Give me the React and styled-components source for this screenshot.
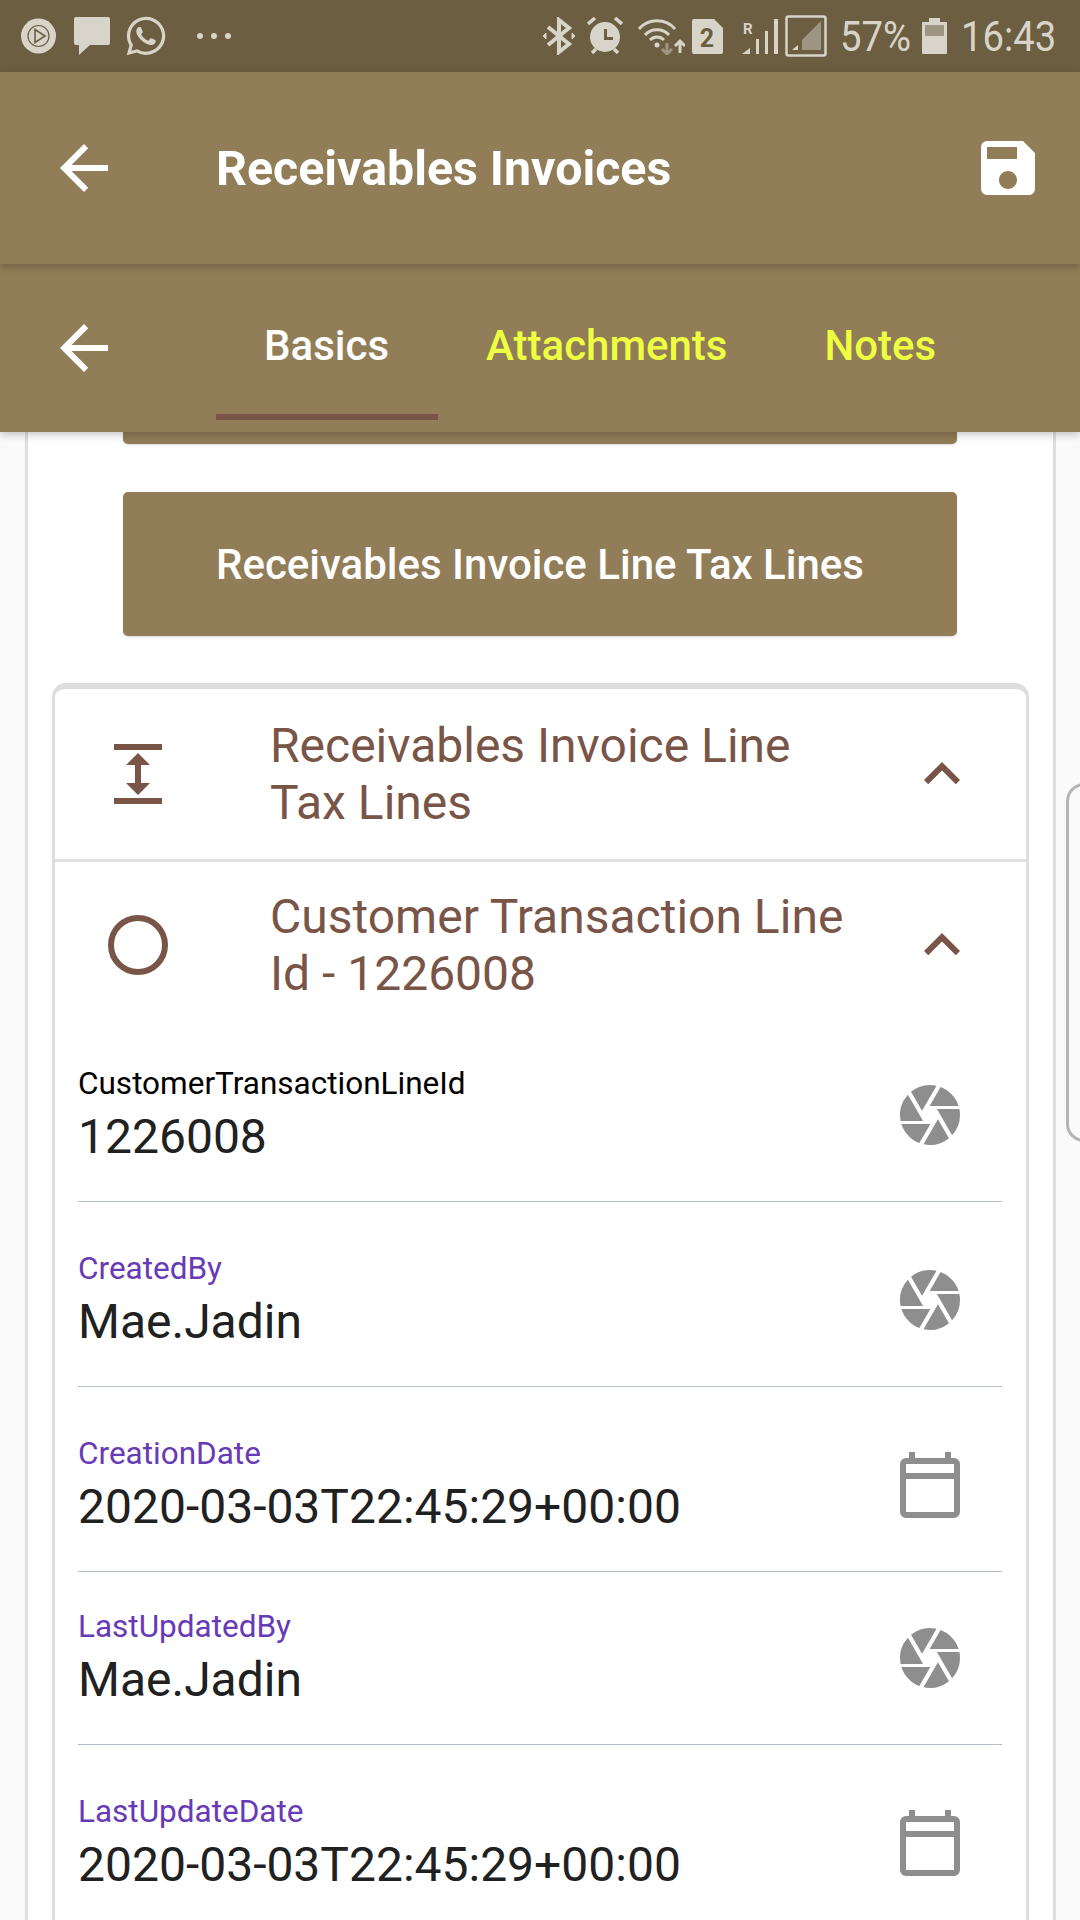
import React from "react";
import styled, { createGlobalStyle } from "styled-components";
import { MdArrowBack, MdSave, MdCamera, MdKeyboardArrowUp } from "react-icons/md";
import { FaWhatsapp } from "react-icons/fa";

const GlobalStyle = createGlobalStyle`
  html, body {
    margin: 0;
    padding: 0;
    background: #fafafa;
  }
  body {
    font-family: Roboto, "Liberation Sans", sans-serif;
  }
`;

const Page = styled.div`
  width: 1080px;
  height: 1920px;
  display: flex;
  flex-direction: column;
  overflow: hidden;
  background: #fafafa;
`;

const StatusBar = styled.div`
  height: 72px;
  flex-shrink: 0;
  background: #6c5e40;
  color: #d8d4ca;
  display: flex;
  align-items: center;
  justify-content: space-between;
  padding: 0 25px 0 21px;
`;

const StatusGroup = styled.div`
  display: flex;
  align-items: center;
`;

const StatusSlot = styled.span`
  display: flex;
  margin-left: ${(p) => p.$gap || 0}px;
`;

const StatusText = styled.span`
  display: inline-block;
  font-size: 43px;
  line-height: 72px;
  font-weight: 400;
  width: ${(p) => p.$width}px;
  margin-left: ${(p) => p.$gap}px;
  white-space: nowrap;
  transform: scaleX(0.89);
  transform-origin: left center;
`;

const AppBar = styled.header`
  height: 192px;
  flex-shrink: 0;
  background: #917d57;
  display: flex;
  align-items: center;
  padding-left: 48px;
  padding-right: 36px;
  color: #fff;
  position: relative;
  z-index: 3;
  box-shadow: 0 3px 8px rgba(0, 0, 0, 0.22);
`;

const AppTitle = styled.h1`
  flex: 1;
  margin: 0 0 0 96px;
  font-size: 48.3px;
  font-weight: 700;
  color: #fff;
`;

const TabBar = styled.nav`
  height: 168px;
  flex-shrink: 0;
  box-sizing: border-box;
  background: #917d57;
  color: #fff;
  display: flex;
  align-items: flex-end;
  padding: 0 0 12px 48px;
  position: relative;
  z-index: 2;
  box-shadow: 0 3px 8px rgba(0, 0, 0, 0.22);
`;

const TabBack = styled.span`
  display: flex;
  align-self: center;
  margin-top: 12px;
  margin-right: 96px;
`;

const Tab = styled.div`
  height: 156px;
  box-sizing: border-box;
  padding: 13px 49px 0 48px;
  display: flex;
  align-items: center;
  font-size: 42px;
  font-weight: 500;
  color: ${(p) => (p.$active ? "#fff" : "#eeff41")};
  border-bottom: 6px solid ${(p) => (p.$active ? "#795548" : "transparent")};
`;

const Scroller = styled.main`
  flex: 1;
  min-height: 0;
  overflow: hidden;
  display: flex;
  align-items: flex-start;
  padding-left: 25px;
`;

const Sheet = styled.section`
  width: 1031px;
  flex-shrink: 0;
  box-sizing: border-box;
  margin-top: -180px;
  padding: 0 24px;
  background: #fff;
  border-left: 3px solid #dedede;
  border-right: 3px solid #dedede;
`;

const ActionButton = styled.div`
  height: 144px;
  margin: 48px 72px 0 71px;
  border-radius: 5px;
  background: #917d57;
  color: #fff;
  font-size: 42px;
  font-weight: 500;
  display: flex;
  align-items: center;
  justify-content: center;
  box-shadow: 0 1px 2px rgba(0, 0, 0, 0.15);
`;

const Accordion = styled.div`
  margin-top: 47px;
  border: 3px solid #dedede;
  border-top-width: 6px;
  border-bottom: 0;
  border-radius: 14px 14px 0 0;
`;

const AccordionHead = styled.div`
  height: ${(p) => p.$height}px;
  box-sizing: border-box;
  padding-bottom: ${(p) => (p.$divided ? 0 : 1)}px;
  display: flex;
  align-items: center;
  color: #795548;
  border-bottom: ${(p) => (p.$divided ? "3px solid #e2e2e2" : "none")};
`;

const HeadIcon = styled.span`
  width: 215px;
  flex-shrink: 0;
  display: flex;
  justify-content: center;
  padding-right: 49px;
  box-sizing: border-box;
`;

const HeadTitle = styled.div`
  width: 580px;
  font-size: 48px;
  line-height: 57px;
`;

const Chevron = styled.span`
  display: flex;
  margin-left: 56px;
`;

const FieldRow = styled.div`
  height: 172px;
  box-sizing: content-box;
  margin: ${(p) => (p.$spaced ? 12 : 0)}px 24px 0 23px;
  display: flex;
  align-items: center;
  justify-content: space-between;
  border-bottom: 1px solid #b4bec4;
`;

const FieldText = styled.div`
  display: flex;
  flex-direction: column;
  padding-top: 3px;
`;

const FieldLabel = styled.label`
  font-size: 31.5px;
  line-height: 40px;
  color: ${(p) => (p.$plain ? "#000" : "#673ab7")};
`;

const FieldValue = styled.div`
  font-size: 48px;
  line-height: 65px;
  color: #212121;
`;

const FieldIcon = styled.span`
  width: 72px;
  height: 72px;
  display: flex;
  align-items: center;
  justify-content: center;
  margin-right: 36px;
  color: #8e8e8e;
`;

const NextCard = styled.div`
  flex-shrink: 0;
  width: 200px;
  height: 353px;
  margin: 351px 0 0 10px;
  border: 3px solid #b4b4b4;
  border-radius: 18px;
  background: #fafafa;
`;

const PlayIcon = () => (
  <svg width="35" height="36" viewBox="0 0 35 36">
    <circle cx="17.5" cy="18" r="17.5" fill="#d8d4ca" />
    <circle cx="17.5" cy="18" r="10.5" fill="none" stroke="#6c5e40" strokeWidth="1.2" />
    <path d="M14 11.5 L24 18 L14 24.5Z" fill="none" stroke="#6c5e40" strokeWidth="1.6" />
  </svg>
);

const ChatIcon = () => (
  <svg width="36" height="38" viewBox="0 0 36 38">
    <path d="M2 0h32a2 2 0 0 1 2 2v24a2 2 0 0 1-2 2H16L5 38V28H2a2 2 0 0 1-2-2V2a2 2 0 0 1 2-2z" fill="#d8d4ca" />
  </svg>
);

const Dots = () => (
  <svg width="36" height="8" viewBox="0 0 36 8">
    <circle cx="4" cy="4" r="3" fill="#d8d4ca" />
    <circle cx="18" cy="4" r="3" fill="#d8d4ca" />
    <circle cx="32" cy="4" r="3" fill="#d8d4ca" />
  </svg>
);

const BluetoothIcon = () => (
  <svg width="34" height="38" viewBox="0 0 34 38" fill="none" stroke="#d8d4ca" strokeWidth="4">
    <path d="M6 10 L27 27 L17 35 V3 L27 11 L6 28" />
    <path d="M1 19 L4 16 V22Z M33 19 L30 16 V22Z" fill="#d8d4ca" strokeWidth="1" />
  </svg>
);

const AlarmIcon = () => (
  <svg width="36" height="38" viewBox="0 0 36 38">
    <circle cx="18" cy="20" r="15" fill="#d8d4ca" />
    <path d="M17 12h3v8h6v3h-9z" fill="#6c5e40" />
    <path d="M1 7 L8 1 M35 7 L28 1 M5 36 L9 32 M31 36 L27 32" stroke="#d8d4ca" strokeWidth="3.5" />
  </svg>
);

const WifiIcon = () => (
  <svg width="48" height="38" viewBox="0 0 48 38" fill="none" stroke="#d8d4ca" strokeWidth="3">
    <path d="M2 12 C11 1 29 1 38 12" />
    <path d="M8 18 C14 11 26 11 32 18" />
    <path d="M13 23 C17 19 23 19 27 23" />
    <circle cx="20" cy="28" r="2.5" fill="#d8d4ca" stroke="none" />
    <path d="M30 26 V37 M25 32 L30 37 L35 32" stroke="#9d9582" />
    <path d="M43 36 V24 M38 29 L43 24 L48 29" />
  </svg>
);

const SimIcon = () => (
  <svg width="31" height="35" viewBox="0 0 31 35">
    <path d="M2 0h20l9 9v24a2 2 0 0 1-2 2H2a2 2 0 0 1-2-2V2a2 2 0 0 1 2-2z" fill="#d8d4ca" />
    <text x="15" y="28" textAnchor="middle" fontSize="25" fontWeight="700" fontFamily="Roboto, sans-serif" fill="#6c5e40">2</text>
  </svg>
);

const RoamingSignalIcon = () => (
  <svg width="36" height="35" viewBox="0 0 36 35" fill="#d8d4ca" overflow="visible">
    <text x="1" y="15" fontSize="15" fontWeight="700" fontFamily="Roboto, sans-serif">R</text>
    <path d="M0 35 L8 29 V35Z" />
    <rect x="14" y="20" width="3" height="15" />
    <rect x="23" y="12" width="3" height="23" />
    <rect x="32" y="0" width="4" height="35" />
  </svg>
);

const BoxSignalIcon = () => (
  <svg width="42" height="42" viewBox="0 0 42 42">
    <rect x="1.500" y="1.500" width="39" height="39" rx="2" fill="none" stroke="#d8d4ca" strokeWidth="2.500" />
    <path d="M7 35 L13 30 V35Z" fill="#d8d4ca" />
    <path d="M17 35 V25 L36 6 V35Z" fill="#9d9582" />
  </svg>
);

const BatteryIcon = () => (
  <svg width="25" height="36" viewBox="0 0 25 36">
    <path d="M1 4h6V0h11v4h6a1 1 0 0 1 1 1v30a1 1 0 0 1-1 1H1a1 1 0 0 1-1-1V5a1 1 0 0 1 1-1z" fill="#d8d4ca" />
    <rect x="3" y="7" width="19" height="11" fill="#9d9582" />
  </svg>
);

const HeightIcon = () => (
  <svg width="48" height="60" viewBox="0 0 48 60" fill="#795548">
    <rect x="0" y="0" width="48" height="6" />
    <rect x="0" y="54" width="48" height="6" />
    <path d="M24 9 L36 21 H27 V39 H36 L24 51 L12 39 H21 V21 H12Z" />
  </svg>
);

const RingIcon = () => (
  <svg width="60" height="60" viewBox="0 0 60 60">
    <circle cx="30" cy="30" r="27" fill="none" stroke="#795548" strokeWidth="6" />
  </svg>
);

const CalendarIcon = () => (
  <svg width="60" height="66" viewBox="0 0 60 66" fill="#8e8e8e">
    <rect x="9" y="0" width="6" height="9" />
    <rect x="45" y="0" width="6" height="9" />
    <rect x="3" y="9" width="54" height="54" rx="3" fill="none" stroke="#8e8e8e" strokeWidth="6" />
    <rect x="3" y="21" width="54" height="6" />
  </svg>
);

const fields = [
  { label: "CustomerTransactionLineId", value: "1226008", icon: "camera", plain: true },
  { label: "CreatedBy", value: "Mae.Jadin", icon: "camera", spaced: true },
  { label: "CreationDate", value: "2020-03-03T22:45:29+00:00", icon: "calendar", spaced: true },
  { label: "LastUpdatedBy", value: "Mae.Jadin", icon: "camera" },
  { label: "LastUpdateDate", value: "2020-03-03T22:45:29+00:00", icon: "calendar", spaced: true },
];

export default function App() {
  return (
    <Page>
      <GlobalStyle />
      <StatusBar>
        <StatusGroup>
          <PlayIcon />
          <StatusSlot $gap={18}><ChatIcon /></StatusSlot>
          <StatusSlot $gap={14}><FaWhatsapp size={44} /></StatusSlot>
          <StatusSlot $gap={28}><Dots /></StatusSlot>
        </StatusGroup>
        <StatusGroup>
          <BluetoothIcon />
          <StatusSlot $gap={11}><AlarmIcon /></StatusSlot>
          <StatusSlot $gap={14}><WifiIcon /></StatusSlot>
          <StatusSlot $gap={7}><SimIcon /></StatusSlot>
          <StatusSlot $gap={19}><RoamingSignalIcon /></StatusSlot>
          <StatusSlot $gap={7}><BoxSignalIcon /></StatusSlot>
          <StatusText $gap={13} $width={69}>57%</StatusText>
          <StatusSlot $gap={13}><BatteryIcon /></StatusSlot>
          <StatusText $gap={14} $width={94}>16:43</StatusText>
        </StatusGroup>
      </StatusBar>
      <AppBar>
        <MdArrowBack size={72} />
        <AppTitle>Receivables Invoices</AppTitle>
        <MdSave size={72} />
      </AppBar>
      <TabBar>
        <TabBack><MdArrowBack size={72} /></TabBack>
        <Tab $active>Basics</Tab>
        <Tab>Attachments</Tab>
        <Tab>Notes</Tab>
      </TabBar>
      <Scroller>
        <Sheet>
          {/* scrolled under the tab bar, only its lower edge shows */}
          <ActionButton />
          <ActionButton>Receivables Invoice Line Tax Lines</ActionButton>
          <Accordion>
            <AccordionHead $height={173} $divided>
              <HeadIcon><HeightIcon /></HeadIcon>
              <HeadTitle>Receivables Invoice Line Tax Lines</HeadTitle>
              <Chevron><MdKeyboardArrowUp size={72} /></Chevron>
            </AccordionHead>
            <AccordionHead $height={167}>
              <HeadIcon><RingIcon /></HeadIcon>
              <HeadTitle>Customer Transaction Line Id - 1226008</HeadTitle>
              <Chevron><MdKeyboardArrowUp size={72} /></Chevron>
            </AccordionHead>
            {fields.map((f) => (
              <FieldRow key={f.label} $spaced={f.spaced}>
                <FieldText>
                  <FieldLabel $plain={f.plain}>{f.label}</FieldLabel>
                  <FieldValue>{f.value}</FieldValue>
                </FieldText>
                <FieldIcon>
                  {f.icon === "camera" ? <MdCamera size={72} /> : <CalendarIcon />}
                </FieldIcon>
              </FieldRow>
            ))}
          </Accordion>
        </Sheet>
        <NextCard />
      </Scroller>
    </Page>
  );
}
